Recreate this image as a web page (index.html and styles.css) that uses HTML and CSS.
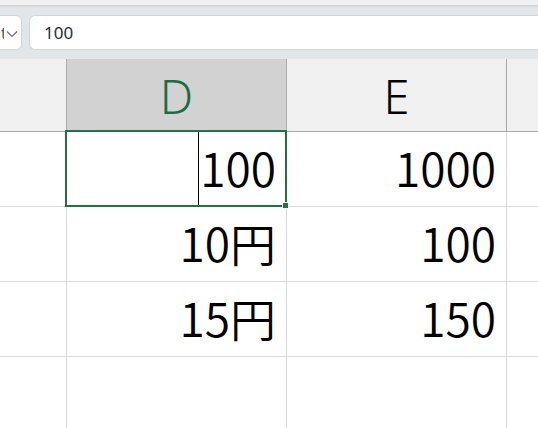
FILE: index.html
```html
<!DOCTYPE html>
<html lang="ja">
<head>
<meta charset="utf-8">
<link rel="stylesheet" href="styles.css">
</head>
<body>
<div class="toolbar">
  <div class="namebox">
    <span class="nb-text">t</span>
    <svg class="chev" width="12" height="8" viewBox="0 0 12 8"><path d="M1 1.5 L6 6.5 L11 1.5" fill="none" stroke="#6b6b6b" stroke-width="1.2"/></svg>
  </div>
  <div class="formula"><span class="ftext">100</span></div>
</div>
<div class="sheet">
  <div class="hdr">&nbsp;</div>
  <div class="hdr sel">D</div>
  <div class="hdr">E</div>
  <div class="hdr last">&nbsp;</div>

  <div class="cell"></div>
  <div class="cell num"><span class="caret"></span>100</div>
  <div class="cell num">1000</div>
  <div class="cell last"></div>

  <div class="cell"></div>
  <div class="cell num">10円</div>
  <div class="cell num">100</div>
  <div class="cell last"></div>

  <div class="cell"></div>
  <div class="cell num">15円</div>
  <div class="cell num">150</div>
  <div class="cell last"></div>

  <div class="cell tall"></div>
  <div class="cell tall"></div>
  <div class="cell tall"></div>
  <div class="cell tall last"></div>

  <div class="selection"><span class="handle"></span></div>
</div>
</body>
</html>
```
FILE: styles.css
```css
html, body {
  margin: 0;
  padding: 0;
  background: #ffffff;
  overflow: hidden;
  width: 538px;
  height: 428px;
}
.toolbar {
  height: 59px;
  box-sizing: border-box;
  background: #e2e6e9;
  border-top: 5px solid #eef0f1;
  display: flex;
  align-items: flex-start;
  padding-top: 10px;
  gap: 7px;
  position: relative;
}
.toolbar::before {
  content: "";
  position: absolute;
  left: 0; right: 0; top: 0;
  height: 3px;
  background: linear-gradient(#cfd3d6, #e2e6e9);
}
.namebox {
  width: 30px;
  margin-left: -8px;
  height: 35px;
  box-sizing: border-box;
  background: #fff;
  border: 1px solid #d3d6d9;
  border-radius: 6px;
  display: flex;
  align-items: center;
  justify-content: flex-end;
  padding-right: 3px;
  gap: 2px;
  overflow: hidden;
}
.nb-text {
  font-family: "Noto Sans", sans-serif;
  font-size: 16px;
  color: #555;
  width: 3px;
  overflow: hidden;
}
.chev { display: block; margin-top: 2px; }
.formula {
  flex: 1;
  height: 35px;
  box-sizing: border-box;
  background: #fff;
  border: 1px solid #d3d6d9;
  border-right: none;
  border-radius: 6px 0 0 6px;
  display: flex;
  align-items: center;
  padding-left: 14px;
}
.ftext {
  font-family: "Noto Sans", sans-serif;
  font-size: 17px;
  color: #1f2d44;
}
.sheet {
  display: grid;
  grid-template-columns: 67px 220px 220px 1fr;
  grid-template-rows: 73px 75px 75px 75px 80px;
  position: relative;
}
.hdr {
  background: #f0f0f0;
  border-right: 1px solid #ababab;
  border-bottom: 1px solid #ababab;
  display: flex;
  align-items: center;
  justify-content: center;
  font-family: "Noto Sans", sans-serif;
  font-weight: 350;
  font-size: 47px;
  color: #000;
  padding-top: 2px;
  box-sizing: border-box;
}
.hdr.sel {
  background: #d2d2d2;
  color: #1e6b41;
}
.hdr.last { border-right: none; }
.cell {
  border-right: 1px solid #dadada;
  border-bottom: 1px solid #dadada;
  box-sizing: border-box;
  font-family: "Noto Sans CJK JP", sans-serif;
  font-weight: 350;
  font-size: 46px;
  color: #000;
  display: flex;
  align-items: center;
  justify-content: flex-end;
  padding-right: 10px;
  padding-bottom: 4px;
  line-height: 1;
}
.cell.last { border-right: none; }
.cell.tall { border-bottom: none; }
.cell.num { position: relative; }
.caret {
  position: absolute;
  left: 131px;
  top: 0;
  bottom: 0;
  width: 1px;
  background: #000;
}
.selection {
  position: absolute;
  left: 65px;
  top: 71px;
  width: 222px;
  height: 77px;
  box-sizing: border-box;
  border: 2px solid #217346;
  pointer-events: none;
}
.handle {
  position: absolute;
  right: -4px;
  bottom: -4px;
  width: 5px;
  height: 5px;
  background: #217346;
  border: 1px solid #fff;
}
```
